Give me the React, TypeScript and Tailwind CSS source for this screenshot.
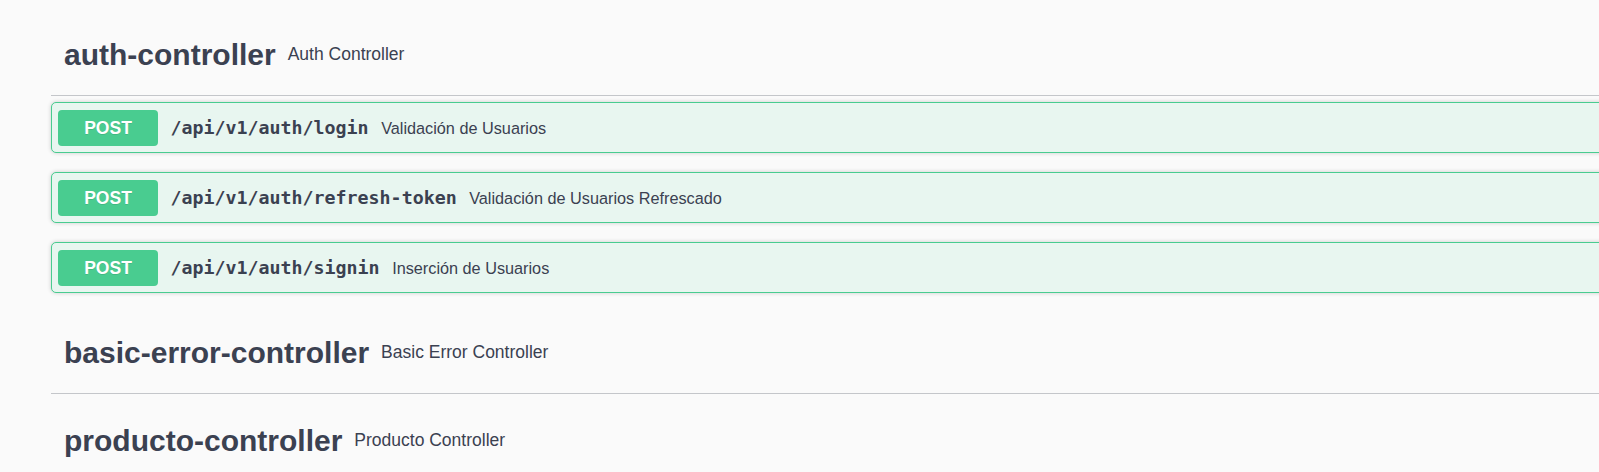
const sections = [
  {
    name: "auth-controller",
    description: "Auth Controller",
    ops: [
      { method: "POST", path: "/api/v1/auth/login", summary: "Validación de Usuarios" },
      { method: "POST", path: "/api/v1/auth/refresh-token", summary: "Validación de Usuarios Refrescado" },
      { method: "POST", path: "/api/v1/auth/signin", summary: "Inserción de Usuarios" },
    ],
  },
  { name: "basic-error-controller", description: "Basic Error Controller", ops: [] },
  { name: "producto-controller", description: "Producto Controller", ops: [] },
];

function OpBlock({ method, path, summary }: { method: string; path: string; summary: string }) {
  return (
    <div className="mb-[19px] rounded-[5px] border border-[#49cc90] bg-[#e8f6f0] shadow-[0_0_4px_rgba(0,0,0,0.19)]">
      <div className="flex h-[49px] items-start px-[6px] pt-[7px]">
        <span className="flex h-[36px] w-[100px] items-center justify-center rounded-[4px] bg-[#49cc90] font-['Liberation_Sans',Arial,sans-serif] text-[17.5px] font-bold text-white [text-shadow:0_1px_0_rgba(0,0,0,0.1)]">
          {method}
        </span>
        <span className="flex h-[36px] items-center px-[12.5px] font-['DejaVu_Sans_Mono',monospace] text-[18.3px] font-bold text-[#3b4151]">
          {path}
        </span>
        <span className="flex h-[36px] items-center font-['Liberation_Sans',Arial,sans-serif] text-[16.25px] text-[#3b4151]">
          {summary}
        </span>
      </div>
    </div>
  );
}

export default function App() {
  return (
    <div className="h-[472px] w-full overflow-hidden bg-[#fafafa] font-['Liberation_Sans',Arial,sans-serif] text-[#3b4151]">
      <div className="ml-[51px] w-[1760px] pt-[14px]">
        {sections.map((s) => (
          <div key={s.name}>
            <div className="mb-[6px] flex h-[82px] items-center border-b border-[#c4c6ca] pl-[13px]">
              <span className="text-[30px] font-bold">{s.name}</span>
              <span className="px-[12px] text-[17.5px]">{s.description}</span>
            </div>
            {s.ops.map((op) => (
              <OpBlock key={op.path} {...op} />
            ))}
          </div>
        ))}
      </div>
    </div>
  );
}
